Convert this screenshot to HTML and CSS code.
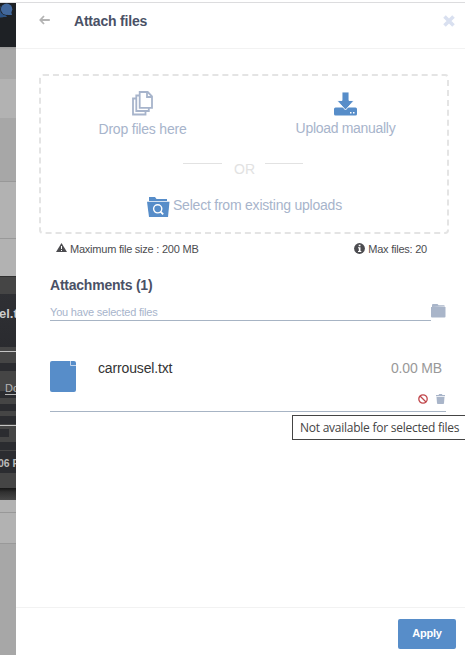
FILE: index.html
```html
<!DOCTYPE html>
<html lang="en">
<head>
<meta charset="utf-8">
<title>Attach files</title>
<link rel="stylesheet" href="styles.css">
</head>
<body>
<div class="app">
  <aside class="backdrop">
    <div class="topbar">
      <svg width="16" height="20" viewBox="0 0 16 20"><circle cx="1" cy="9" r="5.5" fill="#2d5486"/><path d="M0 14h7l-2-3z" fill="#2d5486"/><circle cx="6.4" cy="6.4" r="6.2" fill="#1f2125"/><circle cx="6.6" cy="6.2" r="5.7" fill="#42689c"/><path d="M7 12h5l-1-4z" fill="#42689c"/></svg>
    </div>
    <div class="band band-a"></div>
    <div class="band band-b"></div>
    <div class="band band-c"></div>
    <div class="band band-d"></div>
    <div class="band band-e"></div>
    <div class="card">
      <div class="card-title"><span>el.txt</span></div>
      <div class="rule rule-first"></div>
      <div class="stripe s1"></div>
      <div class="link-row"><span>Do</span></div>
      <div class="stripe s2"></div>
      <div class="stripe s3"></div>
      <div class="stripe s4"></div>
      <div class="rule"></div>
      <div class="stripe s5"></div>
      <div class="stripe s6"></div>
      <div class="time-row"><span>06 PM</span></div>
      <div class="card-shadow"></div>
    </div>
    <div class="band band-f"></div>
    <div class="band band-g"></div>
    <div class="band band-h"></div>
  </aside>

  <main class="panel">
    <header class="header">
      <svg class="back" width="11" height="10" viewBox="0 0 11 10" fill="none" stroke="#b4b4b4" stroke-width="1.8"><path d="M10.8 5H1.5M5 1L1.3 5L5 9"/></svg>
      <h1>Attach files</h1>
      <svg class="close" width="12" height="12" viewBox="0 0 12 12" stroke="#d9e0f0" stroke-width="3.6"><path d="M1.5 1.5L10.5 10.5M10.5 1.5L1.5 10.5"/></svg>
    </header>

    <section class="content">
      <div class="drop">
        <div class="choices">
          <div class="choice drop-choice">
            <svg width="21" height="25" viewBox="0 0 21 25" fill="#fff" stroke="#a7b4cb" stroke-width="1.8"><path d="M1 7.500h12.500v16H1z"/><path d="M4.300 4.500h12.500v15.500H4.300z"/><path d="M7.700 1h8L20 5.300v11.500H7.700z"/><path d="M15 1v5h5" fill="none"/></svg>
            <span>Drop files here</span>
          </div>
          <div class="choice upload-choice">
            <svg width="23" height="24" viewBox="0 0 23 24" fill="#578dc9"><path d="M1.500 15.500h20Q23 15.500 23 17v5q0 1.500-1.500 1.500h-20Q0 23.500 0 22v-5q0-1.500 1.500-1.500z"/><path d="M8 0h7v8.500h5L11.500 18 3 8.500h5z" stroke="#fff" stroke-width=".9"/><path d="M16 20h1.500v1.500H16zM19 20h1.500v1.500H19z" fill="#fff"/></svg>
            <span>Upload manually</span>
          </div>
        </div>
        <div class="or"><i></i><span>OR</span><i></i></div>
        <div class="existing">
          <svg width="23" height="20" viewBox="0 0 23 20"><path d="M2 4V0h6l1.500 2H20v2z" fill="#578dc9"/><path d="M0 4.700h22.500L21 20H2z" fill="#578dc9"/><circle cx="10.700" cy="11.800" r="4.100" fill="none" stroke="#fff" stroke-width="1.400"/><path d="M13.500 14.700l2.700 2.700" stroke="#fff" stroke-width="1.800"/></svg>
          <span>Select from existing uploads</span>
        </div>
      </div>

      <div class="limits">
        <div class="limit size"><svg width="11" height="9" viewBox="0 0 11 9"><path d="M5.500 0L11 9H0z" fill="#4c4c50"/><path d="M5.500 3v3M5.500 7v1" stroke="#fff"/></svg><span>Maximum file size : 200 MB</span></div>
        <div class="limit count"><svg width="11" height="11" viewBox="0 0 11 11"><circle cx="5.500" cy="5.500" r="5.400" fill="#4c4c50"/><path d="M4.700 1.700h1.800v1.500H4.700zM4 4.300h2.500v3.700h.8v1H4V8h.8V5.300H4z" fill="#fff"/></svg><span>Max files: 20</span></div>
      </div>

      <h2>Attachments (1)</h2>
      <div class="selected">
        <div class="selected-label"><span>You have selected files</span></div>
        <svg width="15" height="14" viewBox="0 0 15 14" fill="#a9b5c9"><path d="M1 3V1q0-1 1-1h4q1 0 1.500 1.200h5.200q1 0 1.300 1.200z"/><path d="M0 3h14.500v9.500q0 1-1 1H1q-1 0-1-1z"/></svg>
      </div>
      <div class="file">
        <svg class="file-icon" width="26" height="31" viewBox="0 0 26 31"><path d="M2 0h22q2 0 2 2v27q0 2-2 2H2q-2 0-2-2V2q0-2 2-2z" fill="#578dc9"/><path d="M20.500 0v4.500H26" fill="none" stroke="#c3d5ec" stroke-width="1"/></svg>
        <span class="name">carrousel.txt</span>
        <div class="file-side">
          <span class="weight">0.00 MB</span>
          <div class="actions">
            <svg width="10" height="10" viewBox="0 0 10 10" fill="none" stroke="#c0464b" stroke-width="1.300"><circle cx="5" cy="5" r="4.200"/><path d="M2 2l6 6"/></svg>
            <svg width="9" height="10" viewBox="0 0 9 10" fill="#a9b5c9"><path d="M0 1h2.500L3.200 0h2.600l.7 1H9v1.300H0zM.5 2.900h8l-.5 6.300q0 .8-.8.8H1.800q-.7 0-.8-.8z"/></svg>
            <div class="tooltip"><span>Not available for selected files</span></div>
          </div>
        </div>
      </div>
    </section>

    <footer class="footer"><button class="apply">Apply</button></footer>
  </main>
</div>
</body>
</html>
```
FILE: styles.css
```css
* { box-sizing: border-box; }
body { margin: 0; background: #fff; font-family: "Liberation Sans", Arial, sans-serif; overflow: hidden; }
svg { display: block; flex: none; }
h1, h2 { margin: 0; }
span { white-space: nowrap; }
.app { width: 465px; height: 653px; margin-top: 2px; border-top: 1px solid #dcdcde; display: flex; }

.backdrop { width: 16px; flex: none; overflow: hidden; background: #a7a7a7; }
.topbar { height: 44px; background: #1e2125; }
.band-a { height: 32px; background: linear-gradient(#999, #a7a7a7 3px); }
.band-b { height: 39px; background: #b2b2b2; }
.band-c { height: 64px; border-bottom: 1px solid #989898; }
.band-d { height: 57px; background: #b2b2b2; border-bottom: 1px solid #999; }
.band-e { height: 37px; background: #b2b2b2; }
.card { height: 224px; background: #454545; border-top: 1px solid #303030; display: flex; flex-direction: column; }
.card-title { height: 53px; margin-top: 17px; background: linear-gradient(#2f3034, #2a2b2f); color: #ccc; font-size: 13px; font-weight: bold; line-height: 39px; }
.card-title span { margin-left: -1px; }
.rule { height: 1px; background: #c4c4c4; flex: none; }
.rule-first { margin-top: 4px; }
.stripe { background: #2b2c30; flex: none; }
.s1 { height: 8px; margin-top: 11px; }
.link-row { height: 20px; padding: 10px 0 0 5px; color: #b5b5b5; font-size: 11px; line-height: 14px; }
.link-row span { position: relative; border-bottom: 1px solid #b5b5b5; }
.s2 { height: 7px; }
.s3 { height: 7px; margin-top: 6px; }
.s4 { height: 8px; margin-top: 5px; margin-bottom: 1px; }
.s5 { width: 9px; height: 8px; margin-top: 3px; }
.s6 { height: 8px; margin-top: 5px; }
.time-row { height: 22px; margin-top: 1px; background: #2b2c30; color: #bbb; font-size: 10.5px; font-weight: bold; line-height: 24px; }
.time-row span { margin-left: -2px; }
.card-shadow { height: 12px; margin-top: auto; background: linear-gradient(#151515, #303030 4px, #484848); }
.band-f { height: 13px; background: #b2b2b2; border-bottom: 1px solid #989898; }
.band-g { height: 31px; background: #b2b2b2; border-bottom: 1px solid #999; }
.band-h { height: 111px; }

.panel { flex: 1; min-width: 0; display: flex; flex-direction: column; background: #fff; }
.header { height: 46px; border-bottom: 1px solid #f2f2f2; display: flex; align-items: flex-start; padding: 11px 10px 0 23px; }
.back { margin-top: 1px; }
h1 { font-size: 14px; line-height: 14px; color: #4a5166; margin-left: 24px; letter-spacing: -.2px; }
.close { margin: 1px 0 0 auto; }

.content { flex: 1; padding: 25px 16px 0 23px; }
.drop { height: 160px; border: 2px dashed #e4e4e4; border-radius: 4px; padding-top: 15px; color: #a7b4cb; font-size: 14px; }
.choices { display: flex; height: 70px; }
.choice { display: flex; flex-direction: column; align-items: center; line-height: 16px; }
.drop-choice { width: 203px; gap: 5px; letter-spacing: -.2px; }
.upload-choice { flex: 1; gap: 4px; padding-top: 1px; letter-spacing: -.3px; }
.or { display: flex; justify-content: center; height: 20px; color: #e2e2e2; line-height: 16px; padding-right: 2px; }
.or i { width: 39px; height: 1px; background: #e2e2e2; margin: 2px 10px 0 11px; }
.or i:first-child { margin: 2px 12px 0 11px; }
.or i:last-child { width: 38px; margin: 2px 11px 0 10px; }
.existing { display: flex; margin: 16px 0 0 106px; gap: 3px; line-height: 16px; letter-spacing: -.22px; }
.limits { display: flex; justify-content: space-between; padding: 9px 22px 0 17px; height: 43px; font-size: 11px; line-height: 13px; color: #4c4c50; letter-spacing: -.23px; }
.limit { display: flex; gap: 3px; }
h2 { margin-left: 11px; font-size: 14px; line-height: 16px; color: #4a5166; letter-spacing: -.23px; }
.selected { display: flex; margin: 11px 3px 0 11px; height: 17px; }
.selected-label { width: 381px; border-bottom: 1px solid #a7b4c4; color: #a7b4cb; font-size: 11px; line-height: 17px; letter-spacing: -.2px; }
.file { display: flex; height: 51px; margin: 40px 3px 0 11px; border-bottom: 1px solid #a7b4c4; }
.name { font-size: 14px; line-height: 15px; color: #333; margin-left: 22px; letter-spacing: -.15px; }
.file-side { margin-left: auto; display: flex; flex-direction: column; align-items: flex-end; }
.weight { font-size: 14px; line-height: 15px; color: #999; margin-right: 4px; letter-spacing: -.15px; }
.actions { display: flex; gap: 8px; margin: 18px 1px 0 0; position: relative; }
.tooltip { position: absolute; top: 21px; right: -20px; width: 173px; height: 25px; padding-left: 7px; border: 1px solid #444; border-right: 0; background: #fff; color: #444; font: 12px/23px "Open Sans", "Noto Sans", sans-serif; letter-spacing: -.25px; }
.footer { height: 48px; border-top: 1px solid #f2f2f2; padding: 11px 9px 0 0; display: flex; justify-content: flex-end; }
.apply { width: 58px; height: 30px; padding: 0 0 2px; border: 0; border-radius: 2px; background: #578dc9; color: #fff; font: bold 11px "Liberation Sans", Arial, sans-serif; letter-spacing: -.2px; }
```
